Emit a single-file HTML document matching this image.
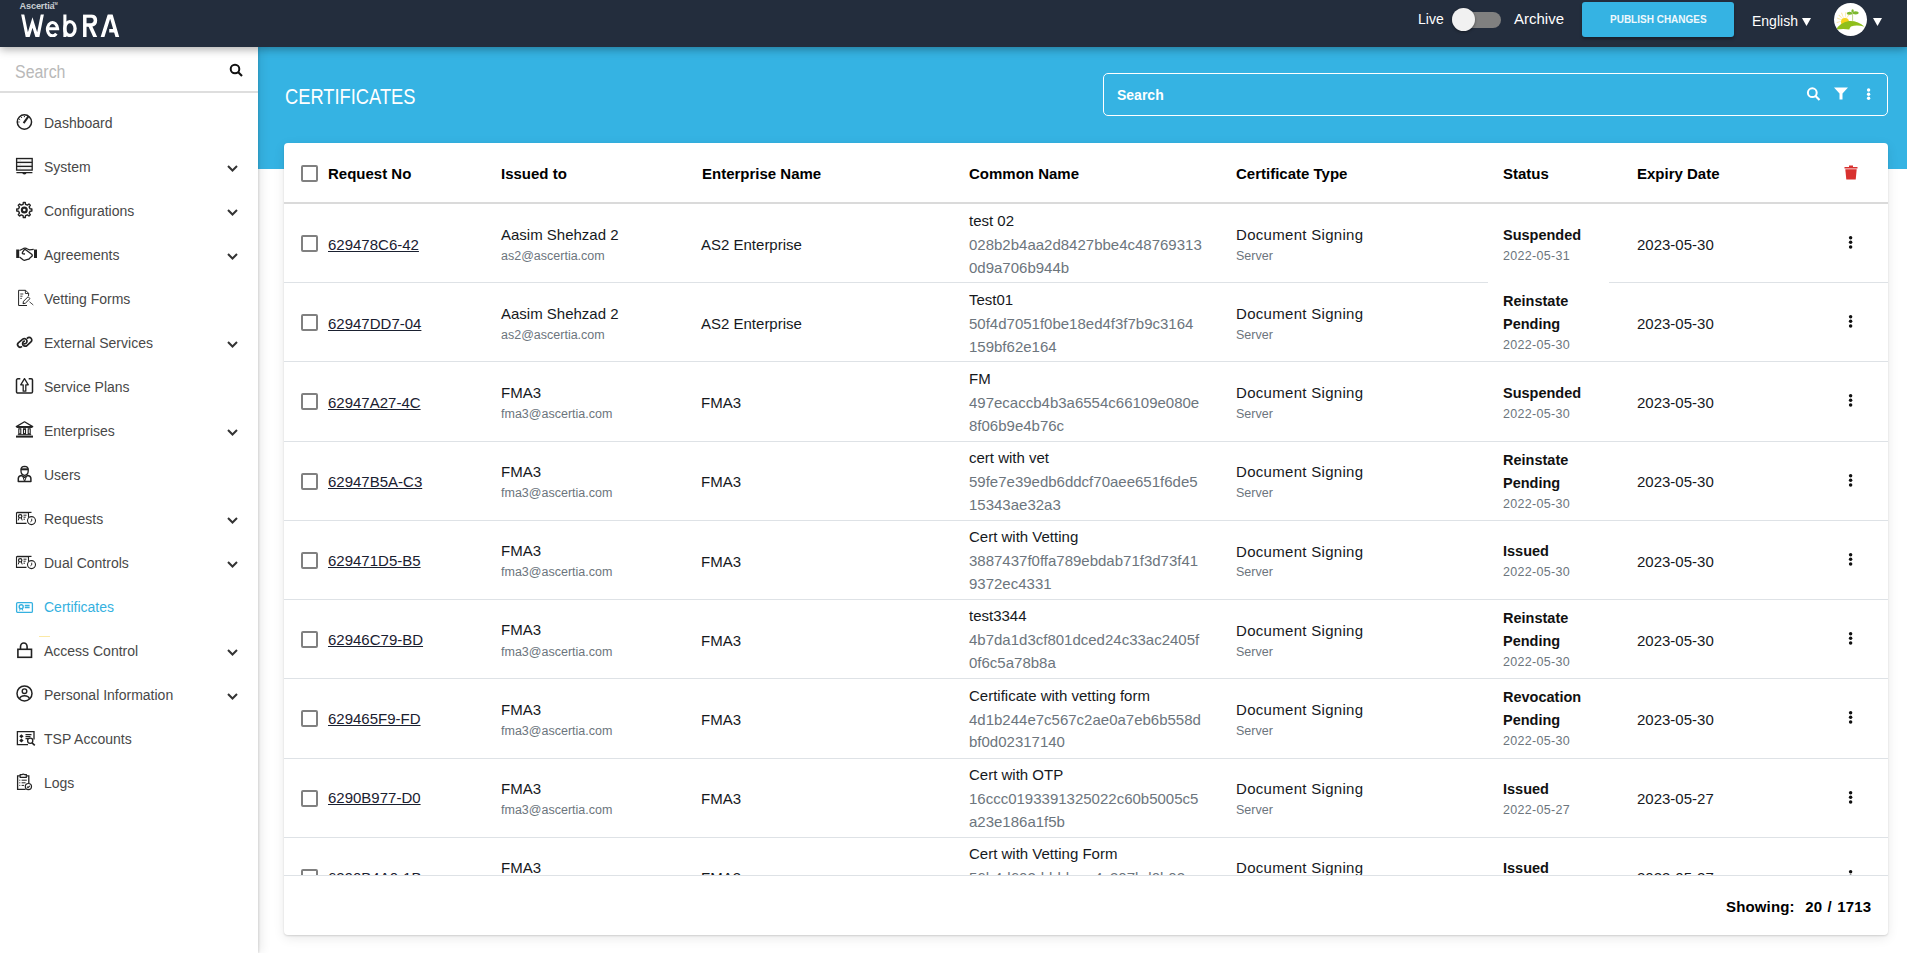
<!DOCTYPE html>
<html><head><meta charset="utf-8"><style>
*{box-sizing:border-box;margin:0;padding:0}
html,body{width:1907px;height:953px;overflow:hidden;background:#fff;font-family:"Liberation Sans",sans-serif}
.t{position:absolute;white-space:nowrap;line-height:22px}
#top{position:absolute;left:0;top:0;width:1907px;height:47px;background:#232d3d;z-index:5;box-shadow:0 2px 9px rgba(0,0,0,.35)}
#side{position:absolute;left:0;top:47px;width:258px;height:906px;background:#fff;z-index:3;box-shadow:1px 0 2px rgba(0,0,0,.12),3px 0 10px rgba(0,0,0,.09)}
#band{position:absolute;left:258px;top:47px;width:1649px;height:122px;background:#35b3e3}
.sic{position:absolute;left:14px;width:26px;height:20px;z-index:4;line-height:0}
.sit{position:absolute;left:44px;font-size:14px;color:#484848;line-height:20px;white-space:nowrap;z-index:4}
.sit.act{color:#35b1e0}
.chev{position:absolute;left:227px;z-index:4;line-height:0}
#card{position:absolute;left:284px;top:143px;width:1604px;height:792px;background:#fff;border-radius:4px;box-shadow:0 1px 2px rgba(0,0,0,.14),0 3px 12px rgba(0,0,0,.09)}
#scroll{position:absolute;left:284px;top:143px;width:1604px;height:733px;overflow:hidden;border-bottom:1px solid #dee2e6}
.row{position:absolute;left:0;width:1604px;border-bottom:1px solid #dfe2e6}
#scroll .t, #scroll .cb, #scroll .kb, #scroll .hl{margin-left:-284px;margin-top:-143px}
.kb{position:absolute}
.hl{position:absolute;height:1px;background:#dee2e6}
.cb{position:absolute;width:17px;height:17px;border:2px solid #808080;border-radius:2px;background:#fff}
.main{font-size:15px;color:#16191d}
.link{font-size:15px;color:#1a2030;text-decoration:underline;text-underline-offset:1px}
.sub{font-size:12.5px;color:#6c757d}
.hash{font-size:15px;color:#6c757d}
.stat{font-size:14.5px;font-weight:bold;color:#111}
.hdr{font-size:15px;font-weight:bold;color:#000}
.kebab{position:absolute;left:1849px;width:4px;height:16px}
.kebab i{display:block;width:3.6px;height:3.6px;border-radius:50%;background:#111;margin-bottom:1px}
</style></head><body>
<div id="top">
  <div class="t" style="left:19.5px;top:1px;font-size:9.2px;line-height:11px;color:#c9cdd3;font-weight:bold;letter-spacing:-0.15px">Ascertia</div>
  <div class="t" style="left:52.5px;top:2px;font-size:3.5px;line-height:4px;color:#c9cdd3;font-weight:bold">TM</div>
  <svg style="position:absolute;left:0;top:0" width="130" height="47" viewBox="0 0 130 47">
    <defs><clipPath id="lc"><rect x="0" y="14.4" width="130" height="22.6"/></clipPath></defs>
    <g clip-path="url(#lc)" fill="none" stroke="#fff" stroke-width="3.1">
      <path d="M21.8 10 L27.6 38.5 L32.5 22.5 L37.5 38.5 L43.2 10" stroke-linejoin="miter" stroke-miterlimit="10"/>
      <path d="M47.4 28.7 H57.6 A5.1 6.7 0 1 0 56.3 33.7" stroke-width="3.1"/>
      <path d="M64.9 10 V38"/>
      <ellipse cx="69.9" cy="28.6" rx="5.2" ry="6.9" stroke-width="3.3"/>
      <path d="M84.8 40 V16.1 H91.6 A4.5 4.5 0 0 1 91.6 25 H85" stroke-width="3.5"/>
      <path d="M89.5 24.5 L96.6 40" stroke-width="3.6"/>
      <path d="M101.6 40 L110.2 12.5 L118.2 40" stroke-width="3.6" stroke-linejoin="miter"/>
      <path d="M109.2 30.8 H115.5" stroke-width="3.6"/>
    </g>
  </svg>
  <div class="t" style="left:1418px;top:8px;font-size:14px;color:#fff;line-height:22px">Live</div>
  <div style="position:absolute;left:1452px;top:12px;width:49px;height:16px;border-radius:8px;background:#808080"></div>
  <div style="position:absolute;left:1452px;top:8px;width:23px;height:23px;border-radius:50%;background:#f1f1f1;box-shadow:0 1px 3px rgba(0,0,0,.4)"></div>
  <div class="t" style="left:1514px;top:8px;font-size:15px;color:#fff;line-height:22px">Archive</div>
  <div style="position:absolute;left:1582px;top:2px;width:152px;height:35px;border-radius:3px;background:#35b3e3;box-shadow:0 2px 3px rgba(0,0,0,.3)"></div>
  <div class="t" style="left:1610px;top:8.5px;font-size:10px;font-weight:bold;color:#eef8fc;line-height:22px;transform:scaleY(1.12);transform-origin:0 15px">PUBLISH CHANGES</div>
  <div class="t" style="left:1752px;top:10px;font-size:14px;color:#fff;line-height:22px">English</div>
  <svg style="position:absolute;left:1802px;top:18px" width="9" height="8" viewBox="0 0 9 8"><path d="M0 0h9L4.5 8z" fill="#fff"/></svg>
  <div style="position:absolute;left:1834px;top:3px;width:33px;height:33px;border-radius:50%;background:#fff;overflow:hidden">
    <svg width="33" height="33" viewBox="0 0 33 33"><g fill="#f7d64a" opacity="0.55"><path d="M10.5 17.5 L3 14.5 L3.5 16z M10.5 17.5 L5 11.5 L4.5 12.5z M10.5 17.5 L8 9.5 L7 10z M10.5 17.5 L11.5 9 L12.5 9.5z M10.5 17.5 L15 11 L15.5 12z M10.5 17.5 L2.5 19 L3 20z"/></g><circle cx="11" cy="19" r="4" fill="#f5d31c"/><path d="M2.5 26.5 Q5 20 15 18 Q24 17.5 30.5 23.8 Q23 21.5 17 23.5 Q15.5 25 15.3 26.6 Q10 25.6 2.5 26.5z" fill="#8fbf1c"/><path d="M18.6 17.8 V10" stroke="#b6cf7a" stroke-width="0.9"/><ellipse cx="15.6" cy="10.2" rx="2.8" ry="1.5" fill="#7cb82f"/><ellipse cx="21.6" cy="9.8" rx="3" ry="1.6" fill="#7cb82f"/><ellipse cx="18.6" cy="8" rx="1.2" ry="1.7" fill="#7cb82f"/></svg>
  </div>
  <svg style="position:absolute;left:1873px;top:18px" width="9" height="8" viewBox="0 0 9 8"><path d="M0 0h9L4.5 8z" fill="#fff"/></svg>
</div>
<div id="band">
  <div class="t" style="left:27px;top:37px;font-size:22px;line-height:26px;color:#fff;transform:scaleX(0.832);transform-origin:0 0">CERTIFICATES</div>
  <div style="position:absolute;left:845px;top:26px;width:785px;height:43px;border:1.5px solid #fff;border-radius:5px"></div>
  <div class="t" style="left:859px;top:37px;font-size:14px;font-weight:bold;color:#fff;line-height:22px">Search</div>
  <svg style="position:absolute;left:1548px;top:40px" width="16" height="16" viewBox="0 0 16 16"><circle cx="6.3" cy="5.7" r="4.4" stroke="#fff" stroke-width="2" fill="none"/><path d="M9.5 9l4 4" stroke="#fff" stroke-width="2.2"/></svg>
  <svg style="position:absolute;left:1576px;top:40px" width="14" height="13" viewBox="0 0 14 13"><path d="M0 0.5h14L8.5 6.5V12.5H5.5V6.5z" fill="#fff"/></svg>
  <svg style="position:absolute;left:1606px;top:40px" width="10" height="16" viewBox="0 0 10 16"><circle cx="4.6" cy="3" r="1.7" fill="#fff"/><circle cx="4.6" cy="7.2" r="1.7" fill="#fff"/><circle cx="4.6" cy="11.3" r="1.7" fill="#fff"/></svg>
</div>
<div id="side">
  <div class="t" style="left:15px;top:13px;font-size:18px;line-height:24px;color:#b9b9b9;transform:scaleX(0.885);transform-origin:0 0">Search</div>
  <svg style="position:absolute;left:229px;top:16px" width="15" height="15" viewBox="0 0 15 15"><circle cx="6" cy="6" r="4.3" stroke="#111" stroke-width="2" fill="none"/><path d="M9 9l4 4" stroke="#111" stroke-width="2.2"/></svg>
  <div style="position:absolute;left:0;top:44px;width:258px;height:1.5px;background:#dedede"></div>
  <div style="position:absolute;left:0;top:-47px">
  <div style="position:absolute;left:39px;top:636px;width:11px;height:1px;background:#fbe9a6"></div>
<div class="sic" style="top:113px"><svg width="26" height="20" viewBox="0 0 26 20"><circle cx="10.4" cy="9" r="7.15" stroke="#222" fill="none" stroke-width="1.5"/><path d="M9.6 10.2 L14.6 3.2" stroke="#222" fill="none" stroke-width="2"/><path d="M5.2 6.2l1 .6M7.2 3.9l.6 1M10.4 3v1.2M4.3 9h1.2" stroke="#222" fill="none" stroke-width="1"/></svg></div>
<div class="sit" style="top:113px">Dashboard</div>
<div class="sic" style="top:157px"><svg width="26" height="20" viewBox="0 0 26 20"><rect x="2.6" y="1.5" width="15.6" height="11.6" fill="#e8e8e8" stroke="#222" stroke-width="1.3"/><path d="M2.6 5.4h15.6M2.6 9.3h15.6" stroke="#222" fill="none" stroke-width="1.2"/><path d="M4.3 3.5h1M4.3 7.4h1M4.3 11.2h1M7 3.5h9.5M7 7.4h9.5M7 11.2h9.5" stroke="#fff" stroke-width="1"/><path d="M2.4 15.6h16M8.8 15.4a1.6 1.4 0 0 0 3.2 0" stroke="#222" fill="none" stroke-width="1.2"/></svg></div>
<div class="sit" style="top:157px">System</div>
<div class="chev" style="top:165px"><svg width="11" height="7" viewBox="0 0 11 7"><path d="M1 1l4.5 4.5L10 1" stroke="#333" stroke-width="2" fill="none"/></svg></div>
<div class="sic" style="top:201px"><svg width="26" height="20" viewBox="0 0 26 20"><path d="M15.97 7.76 L17.84 8.05 L17.84 9.95 L15.97 10.24 L15.18 12.13 L16.31 13.66 L14.96 15.01 L13.43 13.88 L11.54 14.67 L11.25 16.54 L9.35 16.54 L9.06 14.67 L7.17 13.88 L5.64 15.01 L4.29 13.66 L5.42 12.13 L4.63 10.24 L2.76 9.95 L2.76 8.05 L4.63 7.76 L5.42 5.87 L4.29 4.34 L5.64 2.99 L7.17 4.12 L9.06 3.33 L9.35 1.46 L11.25 1.46 L11.54 3.33 L13.43 4.12 L14.96 2.99 L16.31 4.34 L15.18 5.87Z" stroke="#222" fill="none" stroke-width="1.4" stroke-linejoin="round"/><circle cx="10.3" cy="9" r="2.4" stroke="#222" fill="none" stroke-width="2.2"/></svg></div>
<div class="sit" style="top:201px">Configurations</div>
<div class="chev" style="top:209px"><svg width="11" height="7" viewBox="0 0 11 7"><path d="M1 1l4.5 4.5L10 1" stroke="#333" stroke-width="2" fill="none"/></svg></div>
<div class="sic" style="top:245px"><svg width="26" height="20" viewBox="0 0 26 20"><rect x="2.2" y="4.5" width="3" height="8.5" fill="#222"/><rect x="20" y="4.5" width="3" height="8.5" fill="#222"/><path d="M5.5 12 l3.5 2.8 q1.5 1 3 0 l1.6-.4 q1.6 0 2.3-1.5 l2-1.6 q.8-1-.2-2 L12 5 q-1-1-2 0 l-1.5 2.4 q-.7 1 .5 1.4 l2 .2" stroke="#222" fill="none" stroke-width="1.3" stroke-linejoin="round"/><path d="M5.5 5.5 l3-1.5 q2.5-1.8 5 0 l2 .8 l4.2-.5" stroke="#222" fill="none" stroke-width="1.3"/></svg></div>
<div class="sit" style="top:245px">Agreements</div>
<div class="chev" style="top:253px"><svg width="11" height="7" viewBox="0 0 11 7"><path d="M1 1l4.5 4.5L10 1" stroke="#333" stroke-width="2" fill="none"/></svg></div>
<div class="sic" style="top:289px"><svg width="26" height="20" viewBox="0 0 26 20"><path d="M13 16.5H4.6V1.3h7l3 3V7" stroke="#222" fill="none" stroke-width="1"/><path d="M11.4 1.3v3.2h3.2" stroke="#222" fill="none" stroke-width="0.9"/><path d="M6.3 5h3M6.3 7.2h2.2M6.3 9.4h1.5" stroke="#222" fill="none" stroke-width="0.9"/><path d="M9.5 12.3l4.6-4.6 1.9 1.9-4.6 4.6-2.4.5z" stroke="#222" fill="none" stroke-width="1"/><path d="M15.5 12.8l3.8 3.2" stroke="#222" fill="none" stroke-width="0.8"/></svg></div>
<div class="sit" style="top:289px">Vetting Forms</div>
<div class="sic" style="top:333px"><svg width="26" height="20" viewBox="0 0 26 20"><path d="M7.5 13.85 A2.6 2.6 0 0 1 4.56 9.58 L8.76 6.18 A2.6 2.6 0 1 1 9.95 10.76" stroke="#222" fill="none" stroke-width="1.7" stroke-linecap="round"/><path d="M13.36 5.16 A2.6 2.6 0 1 1 16.94 8.93 L12.94 12.53 A2.6 2.6 0 1 1 10.31 8.16" stroke="#222" fill="none" stroke-width="1.7" stroke-linecap="round"/></svg></div>
<div class="sit" style="top:333px">External Services</div>
<div class="chev" style="top:341px"><svg width="11" height="7" viewBox="0 0 11 7"><path d="M1 1l4.5 4.5L10 1" stroke="#333" stroke-width="2" fill="none"/></svg></div>
<div class="sic" style="top:377px"><svg width="26" height="20" viewBox="0 0 26 20"><path d="M6.3 1.8H3.8a1.3 1.3 0 0 0-1.3 1.3v11.6a1.3 1.3 0 0 0 1.3 1.3h13.4a1.3 1.3 0 0 0 1.3-1.3V3.1a1.3 1.3 0 0 0-1.3-1.3h-2.5" stroke="#222" fill="none" stroke-width="1.5"/><path d="M9.2 14.2V7.8H6.7L10.5 1.6l3.8 6.2h-2.5v6.4z" stroke="#222" fill="none" stroke-width="1.3" stroke-linejoin="round"/></svg></div>
<div class="sit" style="top:377px">Service Plans</div>
<div class="sic" style="top:421px"><svg width="26" height="20" viewBox="0 0 26 20"><path d="M2.3 5.6L10.5 0.8l8.2 4.8z" stroke="#222" fill="none" stroke-width="1.3" stroke-linejoin="round"/><path d="M2.6 6.3h15.8" stroke="#222" fill="none" stroke-width="1.3"/><path d="M2 15.6h17" stroke="#222" fill="none" stroke-width="2"/><path d="M3.8 13.7h13.4" stroke="#222" fill="none" stroke-width="1"/><rect x="4.8" y="7.8" width="2" height="5" stroke="#222" fill="none" stroke-width="1.1"/><rect x="9.5" y="7.8" width="2" height="5" stroke="#222" fill="none" stroke-width="1.1"/><rect x="14.2" y="7.8" width="2" height="5" stroke="#222" fill="none" stroke-width="1.1"/></svg></div>
<div class="sit" style="top:421px">Enterprises</div>
<div class="chev" style="top:429px"><svg width="11" height="7" viewBox="0 0 11 7"><path d="M1 1l4.5 4.5L10 1" stroke="#333" stroke-width="2" fill="none"/></svg></div>
<div class="sic" style="top:465px"><svg width="26" height="20" viewBox="0 0 26 20"><path d="M7 4.5 q0-3 3.6-3.2 q3.6.2 3.6 3.2 v1.5 q0 4-3.6 4.3 q-3.6-.3-3.6-4.3z" stroke="#222" fill="none" stroke-width="1.3"/><path d="M6.8 4.3h7.6" stroke="#222" fill="none" stroke-width="2"/><path d="M4.3 16.4v-2.8 q0-2.6 3-3.2 l3.3 2 l3.3-2 q3 .6 3 3.2v2.8z" stroke="#222" fill="none" stroke-width="1.5" stroke-linejoin="round"/><path d="M9 12l1.6 4.4 1.6-4.4" stroke="#222" fill="none" stroke-width="1"/></svg></div>
<div class="sit" style="top:465px">Users</div>
<div class="sic" style="top:509px"><svg width="26" height="20" viewBox="0 0 26 20"><path d="M14.5 11.5 V3.8 H2.5 v10.6 h10" stroke="#222" fill="none" stroke-width="1.1"/><path d="M3 3.4h14.5" stroke="#222" stroke-width="1.2"/><circle cx="6.2" cy="7.3" r="1.7" stroke="#222" fill="none" stroke-width="1.2"/><path d="M5 9l-.8 2.4M7.4 9l.8 2.4M9.5 6.2h3M9.5 8.2h2.2M9.5 10.2h1.5" stroke="#222" fill="none" stroke-width="1"/><circle cx="17.5" cy="11.6" r="4" fill="#fff" stroke="#222" stroke-width="1.1"/><path d="M17.7 9.7v2.3l-1.3.9" stroke="#222" fill="none" stroke-width="0.9"/></svg></div>
<div class="sit" style="top:509px">Requests</div>
<div class="chev" style="top:517px"><svg width="11" height="7" viewBox="0 0 11 7"><path d="M1 1l4.5 4.5L10 1" stroke="#333" stroke-width="2" fill="none"/></svg></div>
<div class="sic" style="top:553px"><svg width="26" height="20" viewBox="0 0 26 20"><path d="M14.5 11.5 V3.8 H2.5 v10.6 h10" stroke="#222" fill="none" stroke-width="1.1"/><path d="M3 3.4h14.5" stroke="#222" stroke-width="1.2"/><circle cx="6.2" cy="7.3" r="1.7" stroke="#222" fill="none" stroke-width="1.2"/><path d="M5 9l-.8 2.4M7.4 9l.8 2.4M9.5 6.2h3M9.5 8.2h2.2M9.5 10.2h1.5" stroke="#222" fill="none" stroke-width="1"/><circle cx="17.5" cy="11.6" r="4" fill="#fff" stroke="#222" stroke-width="1.1"/><path d="M17.7 9.7v2.3l-1.3.9" stroke="#222" fill="none" stroke-width="0.9"/></svg></div>
<div class="sit" style="top:553px">Dual Controls</div>
<div class="chev" style="top:561px"><svg width="11" height="7" viewBox="0 0 11 7"><path d="M1 1l4.5 4.5L10 1" stroke="#333" stroke-width="2" fill="none"/></svg></div>
<div class="sic" style="top:597px"><svg width="26" height="20" viewBox="0 0 26 20"><rect x="2.6" y="5.6" width="15.8" height="9.8" rx="1.2" stroke="#35b1e0" fill="none" stroke-width="1.3"/><circle cx="7.2" cy="9.7" r="2" stroke="#35b1e0" fill="none" stroke-width="1.4"/><path d="M6.2 11.6l-.6 2M8.2 11.6l.6 2" stroke="#35b1e0" fill="none" stroke-width="1"/><path d="M10.8 8.6h4.8M10.8 10.4h4.8" stroke="#35b1e0" fill="none" stroke-width="1.5"/></svg></div>
<div class="sit act" style="top:597px">Certificates</div>
<div class="sic" style="top:641px"><svg width="26" height="20" viewBox="0 0 26 20"><path d="M6.5 8V5.8a3.3 3.8 0 0 1 6.6 0V8" stroke="#222" fill="none" stroke-width="1.6"/><rect x="3.9" y="8.3" width="13.6" height="8" stroke="#222" fill="none" stroke-width="1.6"/></svg></div>
<div class="sit" style="top:641px">Access Control</div>
<div class="chev" style="top:649px"><svg width="11" height="7" viewBox="0 0 11 7"><path d="M1 1l4.5 4.5L10 1" stroke="#333" stroke-width="2" fill="none"/></svg></div>
<div class="sic" style="top:685px"><svg width="26" height="20" viewBox="0 0 26 20"><circle cx="10.5" cy="8.4" r="7.5" stroke="#222" fill="none" stroke-width="1.5"/><circle cx="10.5" cy="6.2" r="2.3" stroke="#222" fill="none" stroke-width="1.4"/><path d="M5.5 13.7 q1-3 5-3 q4 0 5 3" stroke="#222" fill="none" stroke-width="1.5"/></svg></div>
<div class="sit" style="top:685px">Personal Information</div>
<div class="chev" style="top:693px"><svg width="11" height="7" viewBox="0 0 11 7"><path d="M1 1l4.5 4.5L10 1" stroke="#333" stroke-width="2" fill="none"/></svg></div>
<div class="sic" style="top:729px"><svg width="26" height="20" viewBox="0 0 26 20"><path d="M14 15.6H3.4V2.6h16.6v8" stroke="#222" fill="none" stroke-width="1.3"/><path d="M7.4 5.2 l2.2 2 -2.2 2 -2.2 -2z M7.4 9.4l2.2 2-2.2 2-2.2-2z" fill="#222"/><path d="M11.5 5.6h6M11.5 7.6h5M11.5 9.6h2.5" stroke="#222" fill="none" stroke-width="1.1"/><circle cx="16.2" cy="11.8" r="2.6" fill="#fff" stroke="#222" stroke-width="1.3"/><path d="M18 13.8l2.8 2.6" stroke="#222" fill="none" stroke-width="1.6"/></svg></div>
<div class="sit" style="top:729px">TSP Accounts</div>
<div class="sic" style="top:773px"><svg width="26" height="20" viewBox="0 0 26 20"><path d="M6 2.8H3.6v13.6h8M14.8 10V2.8h-2.4" stroke="#222" fill="none" stroke-width="1.3"/><path d="M6.2 4.4V1.6h1.8a1.5 1.2 0 0 1 2.5 0h1.8v2.8z" stroke="#222" fill="none" stroke-width="1.2"/><path d="M5.3 7.2h1M7.6 7.2h5.2M5.3 9.8h1M7.6 9.8h4M5.3 12.4h1M7.6 12.4h2.5" stroke="#222" fill="none" stroke-width="1"/><circle cx="14.4" cy="13.6" r="3.1" fill="#fff" stroke="#222" stroke-width="1.2"/><path d="M13 13.6l1 1 1.8-1.8" stroke="#222" fill="none" stroke-width="1.1"/></svg></div>
<div class="sit" style="top:773px">Logs</div>
  </div>
</div>
<div id="card">
</div>
<div id="scroll">
  <div class="cb" style="left:301px;top:165px"></div>
  <div class="t hdr" style="left:328px;top:163px">Request No</div>
  <div class="t hdr" style="left:501px;top:163px">Issued to</div>
  <div class="t hdr" style="left:702px;top:163px">Enterprise Name</div>
  <div class="t hdr" style="left:969px;top:163px">Common Name</div>
  <div class="t hdr" style="left:1236px;top:163px">Certificate Type</div>
  <div class="t hdr" style="left:1503px;top:163px">Status</div>
  <div class="t hdr" style="left:1637px;top:163px">Expiry Date</div>
  <svg class="kb" style="left:1844px;top:165px" width="14" height="15" viewBox="0 0 14 15"><path d="M0.5 2h13v1.5h-13z M5 0.5h4v1.5h-4z" fill="#d8312f"/><path d="M1.3 4.2h11.4l-1 10.3h-9.4z" fill="#d8312f"/></svg>
  <div class="hl" style="top:202px;left:284px;width:1604px;height:2px;background:#dadada"></div>
<div class="hl" style="top:282px;left:284px;width:1204px"></div>
<div class="hl" style="top:282px;left:1609px;width:279px"></div>
<div class="cb" style="left:301px;top:235px"></div>
<div class="t link" style="left:328px;top:235px;line-height:20px;">629478C6-42</div>
<div class="t main" style="left:501px;top:225px;line-height:20px;">Aasim Shehzad 2</div>
<div class="t sub" style="left:501px;top:246px;line-height:20px;">as2@ascertia.com</div>
<div class="t main" style="left:701px;top:235px;line-height:20px;">AS2 Enterprise</div>
<div class="t main" style="left:969px;top:211px;line-height:20px;">test 02</div>
<div class="t hash" style="left:969px;top:235px;line-height:20px;">028b2b4aa2d8427bbe4c48769313</div>
<div class="t hash" style="left:969px;top:258px;line-height:20px;">0d9a706b944b</div>
<div class="t main" style="left:1236px;top:225px;line-height:20px;letter-spacing:0.3px">Document Signing</div>
<div class="t sub" style="left:1236px;top:246px;line-height:20px;">Server</div>
<div class="t stat" style="left:1503px;top:225px;line-height:20px;">Suspended</div>
<div class="t sub" style="left:1503px;top:246px;line-height:20px;letter-spacing:0.3px">2022-05-31</div>
<div class="t main" style="left:1637px;top:235px;line-height:20px;">2023-05-30</div>
<svg class="kb" style="left:1846px;top:234px" width="10" height="17" viewBox="0 0 10 17"><circle cx="4.6" cy="3.7" r="1.75" fill="#111"/><circle cx="4.6" cy="8.3" r="1.75" fill="#111"/><circle cx="4.6" cy="12.9" r="1.75" fill="#111"/></svg>
<div class="hl" style="top:361px;left:284px;width:1604px"></div>
<div class="cb" style="left:301px;top:314px"></div>
<div class="t link" style="left:328px;top:314px;line-height:20px;">62947DD7-04</div>
<div class="t main" style="left:501px;top:304px;line-height:20px;">Aasim Shehzad 2</div>
<div class="t sub" style="left:501px;top:325px;line-height:20px;">as2@ascertia.com</div>
<div class="t main" style="left:701px;top:314px;line-height:20px;">AS2 Enterprise</div>
<div class="t main" style="left:969px;top:290px;line-height:20px;">Test01</div>
<div class="t hash" style="left:969px;top:314px;line-height:20px;">50f4d7051f0be18ed4f3f7b9c3164</div>
<div class="t hash" style="left:969px;top:337px;line-height:20px;">159bf62e164</div>
<div class="t main" style="left:1236px;top:304px;line-height:20px;letter-spacing:0.3px">Document Signing</div>
<div class="t sub" style="left:1236px;top:325px;line-height:20px;">Server</div>
<div class="t stat" style="left:1503px;top:291px;line-height:20px;">Reinstate</div>
<div class="t stat" style="left:1503px;top:314px;line-height:20px;">Pending</div>
<div class="t sub" style="left:1503px;top:335px;line-height:20px;letter-spacing:0.3px">2022-05-30</div>
<div class="t main" style="left:1637px;top:314px;line-height:20px;">2023-05-30</div>
<svg class="kb" style="left:1846px;top:313px" width="10" height="17" viewBox="0 0 10 17"><circle cx="4.6" cy="3.7" r="1.75" fill="#111"/><circle cx="4.6" cy="8.3" r="1.75" fill="#111"/><circle cx="4.6" cy="12.9" r="1.75" fill="#111"/></svg>
<div class="hl" style="top:441px;left:284px;width:1604px"></div>
<div class="cb" style="left:301px;top:393px"></div>
<div class="t link" style="left:328px;top:393px;line-height:20px;">62947A27-4C</div>
<div class="t main" style="left:501px;top:383px;line-height:20px;">FMA3</div>
<div class="t sub" style="left:501px;top:404px;line-height:20px;">fma3@ascertia.com</div>
<div class="t main" style="left:701px;top:393px;line-height:20px;">FMA3</div>
<div class="t main" style="left:969px;top:369px;line-height:20px;">FM</div>
<div class="t hash" style="left:969px;top:393px;line-height:20px;">497ecaccb4b3a6554c66109e080e</div>
<div class="t hash" style="left:969px;top:416px;line-height:20px;">8f06b9e4b76c</div>
<div class="t main" style="left:1236px;top:383px;line-height:20px;letter-spacing:0.3px">Document Signing</div>
<div class="t sub" style="left:1236px;top:404px;line-height:20px;">Server</div>
<div class="t stat" style="left:1503px;top:383px;line-height:20px;">Suspended</div>
<div class="t sub" style="left:1503px;top:404px;line-height:20px;letter-spacing:0.3px">2022-05-30</div>
<div class="t main" style="left:1637px;top:393px;line-height:20px;">2023-05-30</div>
<svg class="kb" style="left:1846px;top:392px" width="10" height="17" viewBox="0 0 10 17"><circle cx="4.6" cy="3.7" r="1.75" fill="#111"/><circle cx="4.6" cy="8.3" r="1.75" fill="#111"/><circle cx="4.6" cy="12.9" r="1.75" fill="#111"/></svg>
<div class="hl" style="top:520px;left:284px;width:1604px"></div>
<div class="cb" style="left:301px;top:473px"></div>
<div class="t link" style="left:328px;top:472px;line-height:20px;">62947B5A-C3</div>
<div class="t main" style="left:501px;top:462px;line-height:20px;">FMA3</div>
<div class="t sub" style="left:501px;top:483px;line-height:20px;">fma3@ascertia.com</div>
<div class="t main" style="left:701px;top:472px;line-height:20px;">FMA3</div>
<div class="t main" style="left:969px;top:448px;line-height:20px;">cert with vet</div>
<div class="t hash" style="left:969px;top:472px;line-height:20px;">59fe7e39edb6ddcf70aee651f6de5</div>
<div class="t hash" style="left:969px;top:495px;line-height:20px;">15343ae32a3</div>
<div class="t main" style="left:1236px;top:462px;line-height:20px;letter-spacing:0.3px">Document Signing</div>
<div class="t sub" style="left:1236px;top:483px;line-height:20px;">Server</div>
<div class="t stat" style="left:1503px;top:450px;line-height:20px;">Reinstate</div>
<div class="t stat" style="left:1503px;top:473px;line-height:20px;">Pending</div>
<div class="t sub" style="left:1503px;top:494px;line-height:20px;letter-spacing:0.3px">2022-05-30</div>
<div class="t main" style="left:1637px;top:472px;line-height:20px;">2023-05-30</div>
<svg class="kb" style="left:1846px;top:472px" width="10" height="17" viewBox="0 0 10 17"><circle cx="4.6" cy="3.7" r="1.75" fill="#111"/><circle cx="4.6" cy="8.3" r="1.75" fill="#111"/><circle cx="4.6" cy="12.9" r="1.75" fill="#111"/></svg>
<div class="hl" style="top:599px;left:284px;width:1604px"></div>
<div class="cb" style="left:301px;top:552px"></div>
<div class="t link" style="left:328px;top:551px;line-height:20px;">629471D5-B5</div>
<div class="t main" style="left:501px;top:541px;line-height:20px;">FMA3</div>
<div class="t sub" style="left:501px;top:562px;line-height:20px;">fma3@ascertia.com</div>
<div class="t main" style="left:701px;top:552px;line-height:20px;">FMA3</div>
<div class="t main" style="left:969px;top:527px;line-height:20px;">Cert with Vetting</div>
<div class="t hash" style="left:969px;top:551px;line-height:20px;">3887437f0ffa789ebdab71f3d73f41</div>
<div class="t hash" style="left:969px;top:574px;line-height:20px;">9372ec4331</div>
<div class="t main" style="left:1236px;top:542px;line-height:20px;letter-spacing:0.3px">Document Signing</div>
<div class="t sub" style="left:1236px;top:562px;line-height:20px;">Server</div>
<div class="t stat" style="left:1503px;top:541px;line-height:20px;">Issued</div>
<div class="t sub" style="left:1503px;top:562px;line-height:20px;letter-spacing:0.3px">2022-05-30</div>
<div class="t main" style="left:1637px;top:552px;line-height:20px;">2023-05-30</div>
<svg class="kb" style="left:1846px;top:551px" width="10" height="17" viewBox="0 0 10 17"><circle cx="4.6" cy="3.7" r="1.75" fill="#111"/><circle cx="4.6" cy="8.3" r="1.75" fill="#111"/><circle cx="4.6" cy="12.9" r="1.75" fill="#111"/></svg>
<div class="hl" style="top:678px;left:284px;width:1604px"></div>
<div class="cb" style="left:301px;top:631px"></div>
<div class="t link" style="left:328px;top:630px;line-height:20px;">62946C79-BD</div>
<div class="t main" style="left:501px;top:620px;line-height:20px;">FMA3</div>
<div class="t sub" style="left:501px;top:642px;line-height:20px;">fma3@ascertia.com</div>
<div class="t main" style="left:701px;top:631px;line-height:20px;">FMA3</div>
<div class="t main" style="left:969px;top:606px;line-height:20px;">test3344</div>
<div class="t hash" style="left:969px;top:630px;line-height:20px;">4b7da1d3cf801dced24c33ac2405f</div>
<div class="t hash" style="left:969px;top:653px;line-height:20px;">0f6c5a78b8a</div>
<div class="t main" style="left:1236px;top:621px;line-height:20px;letter-spacing:0.3px">Document Signing</div>
<div class="t sub" style="left:1236px;top:642px;line-height:20px;">Server</div>
<div class="t stat" style="left:1503px;top:608px;line-height:20px;">Reinstate</div>
<div class="t stat" style="left:1503px;top:631px;line-height:20px;">Pending</div>
<div class="t sub" style="left:1503px;top:652px;line-height:20px;letter-spacing:0.3px">2022-05-30</div>
<div class="t main" style="left:1637px;top:631px;line-height:20px;">2023-05-30</div>
<svg class="kb" style="left:1846px;top:630px" width="10" height="17" viewBox="0 0 10 17"><circle cx="4.6" cy="3.7" r="1.75" fill="#111"/><circle cx="4.6" cy="8.3" r="1.75" fill="#111"/><circle cx="4.6" cy="12.9" r="1.75" fill="#111"/></svg>
<div class="hl" style="top:758px;left:284px;width:1604px"></div>
<div class="cb" style="left:301px;top:710px"></div>
<div class="t link" style="left:328px;top:709px;line-height:20px;">629465F9-FD</div>
<div class="t main" style="left:501px;top:700px;line-height:20px;">FMA3</div>
<div class="t sub" style="left:501px;top:721px;line-height:20px;">fma3@ascertia.com</div>
<div class="t main" style="left:701px;top:710px;line-height:20px;">FMA3</div>
<div class="t main" style="left:969px;top:686px;line-height:20px;">Certificate with vetting form</div>
<div class="t hash" style="left:969px;top:710px;line-height:20px;">4d1b244e7c567c2ae0a7eb6b558d</div>
<div class="t hash" style="left:969px;top:732px;line-height:20px;">bf0d02317140</div>
<div class="t main" style="left:1236px;top:700px;line-height:20px;letter-spacing:0.3px">Document Signing</div>
<div class="t sub" style="left:1236px;top:721px;line-height:20px;">Server</div>
<div class="t stat" style="left:1503px;top:687px;line-height:20px;">Revocation</div>
<div class="t stat" style="left:1503px;top:710px;line-height:20px;">Pending</div>
<div class="t sub" style="left:1503px;top:731px;line-height:20px;letter-spacing:0.3px">2022-05-30</div>
<div class="t main" style="left:1637px;top:710px;line-height:20px;">2023-05-30</div>
<svg class="kb" style="left:1846px;top:709px" width="10" height="17" viewBox="0 0 10 17"><circle cx="4.6" cy="3.7" r="1.75" fill="#111"/><circle cx="4.6" cy="8.3" r="1.75" fill="#111"/><circle cx="4.6" cy="12.9" r="1.75" fill="#111"/></svg>
<div class="hl" style="top:837px;left:284px;width:1604px"></div>
<div class="cb" style="left:301px;top:790px"></div>
<div class="t link" style="left:328px;top:788px;line-height:20px;">6290B977-D0</div>
<div class="t main" style="left:501px;top:779px;line-height:20px;">FMA3</div>
<div class="t sub" style="left:501px;top:800px;line-height:20px;">fma3@ascertia.com</div>
<div class="t main" style="left:701px;top:789px;line-height:20px;">FMA3</div>
<div class="t main" style="left:969px;top:765px;line-height:20px;">Cert with OTP</div>
<div class="t hash" style="left:969px;top:789px;line-height:20px;">16ccc0193391325022c60b5005c5</div>
<div class="t hash" style="left:969px;top:812px;line-height:20px;">a23e186a1f5b</div>
<div class="t main" style="left:1236px;top:779px;line-height:20px;letter-spacing:0.3px">Document Signing</div>
<div class="t sub" style="left:1236px;top:800px;line-height:20px;">Server</div>
<div class="t stat" style="left:1503px;top:779px;line-height:20px;">Issued</div>
<div class="t sub" style="left:1503px;top:800px;line-height:20px;letter-spacing:0.3px">2022-05-27</div>
<div class="t main" style="left:1637px;top:789px;line-height:20px;">2023-05-27</div>
<svg class="kb" style="left:1846px;top:789px" width="10" height="17" viewBox="0 0 10 17"><circle cx="4.6" cy="3.7" r="1.75" fill="#111"/><circle cx="4.6" cy="8.3" r="1.75" fill="#111"/><circle cx="4.6" cy="12.9" r="1.75" fill="#111"/></svg>
<div class="cb" style="left:301px;top:869px"></div>
<div class="t link" style="left:328px;top:868px;line-height:20px;">6290B4A0-1B</div>
<div class="t main" style="left:501px;top:858px;line-height:20px;">FMA3</div>
<div class="t sub" style="left:501px;top:879px;line-height:20px;">fma3@ascertia.com</div>
<div class="t main" style="left:701px;top:868px;line-height:20px;">FMA3</div>
<div class="t main" style="left:969px;top:844px;line-height:20px;">Cert with Vetting Form</div>
<div class="t hash" style="left:969px;top:868px;line-height:20px;">56b4d602ddddaaa4c307bd0b02</div>
<div class="t hash" style="left:969px;top:891px;line-height:20px;">0a0a0a0a0a</div>
<div class="t main" style="left:1236px;top:858px;line-height:20px;letter-spacing:0.3px">Document Signing</div>
<div class="t sub" style="left:1236px;top:879px;line-height:20px;">Server</div>
<div class="t stat" style="left:1503px;top:858px;line-height:20px;">Issued</div>
<div class="t sub" style="left:1503px;top:879px;line-height:20px;letter-spacing:0.3px">2022-05-27</div>
<div class="t main" style="left:1637px;top:868px;line-height:20px;">2023-05-27</div>
<svg class="kb" style="left:1846px;top:868px" width="10" height="17" viewBox="0 0 10 17"><circle cx="4.6" cy="3.7" r="1.75" fill="#111"/><circle cx="4.6" cy="8.3" r="1.75" fill="#111"/><circle cx="4.6" cy="12.9" r="1.75" fill="#111"/></svg>
</div>
<div class="t" style="left:1726px;top:896px;font-size:15px;font-weight:bold;color:#000;word-spacing:1px;letter-spacing:0.15px">Showing:&nbsp; 20 / 1713</div>
</body></html>
